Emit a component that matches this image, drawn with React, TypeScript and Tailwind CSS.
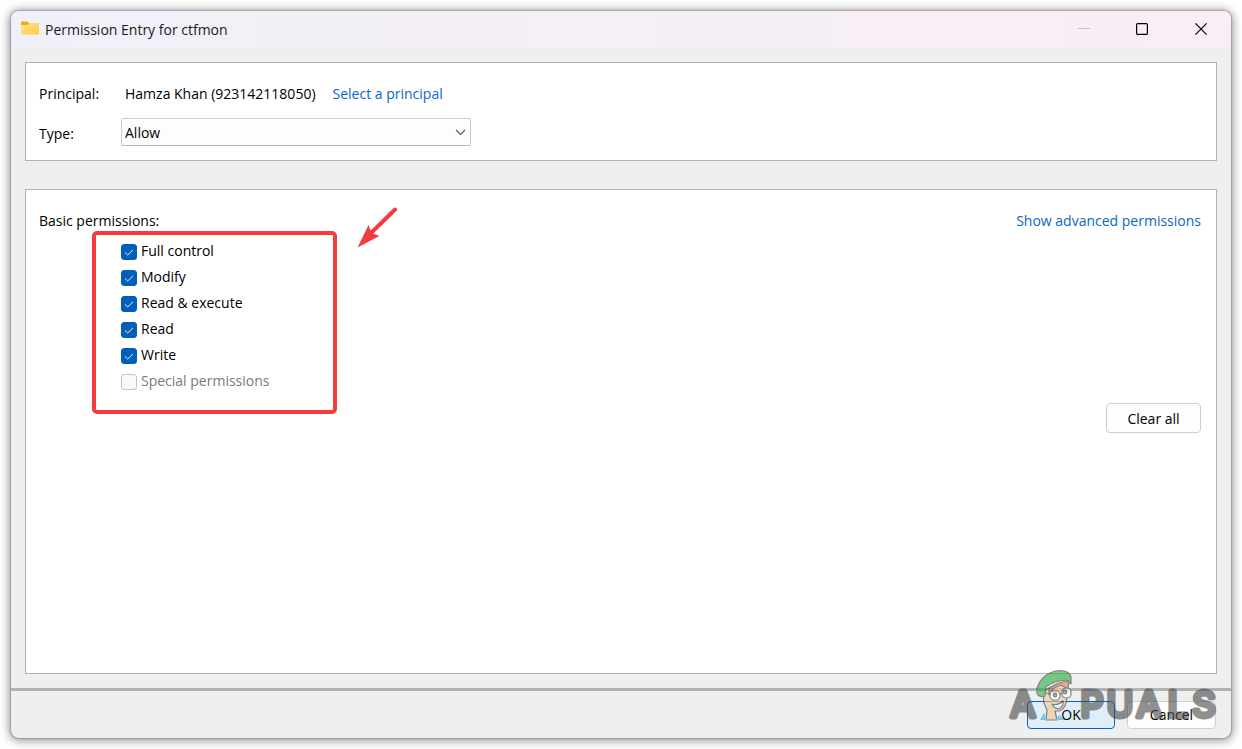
import { useState } from 'react'

const permissions = [
  { id: 'full', label: 'Full control' },
  { id: 'modify', label: 'Modify' },
  { id: 'execute', label: 'Read & execute' },
  { id: 'read', label: 'Read' },
  { id: 'write', label: 'Write' },
  { id: 'special', label: 'Special permissions', disabled: true },
]

const FolderIcon = () => (
  <svg width="18" height="14" viewBox="0 0 18 14" className="mb-[3px]" aria-hidden="true">
    <defs>
      <linearGradient id="folder" x1="0" y1="0" x2="1" y2="1">
        <stop offset="0" stopColor="#ffe594" />
        <stop offset="1" stopColor="#ffcb3d" />
      </linearGradient>
    </defs>
    <path d="M0 1.5Q0 0.5 1 0.5H6L8 2V5H0Z" fill="#f0ab14" />
    <path d="M0 4H6.5L8.5 2H17Q18 2 18 3V12.5Q18 13.5 17 13.5H1Q0 13.5 0 12.5Z" fill="url(#folder)" />
  </svg>
)

const TitleBar = () => (
  <header className="flex h-[37px] items-center rounded-t-lg bg-linear-to-r from-[#f1f0f8] to-[#f9edf6] pl-[10px]">
    <FolderIcon />
    <h1 className="ml-[6px] flex-1 text-[14px] text-[#1a1a1a]">Permission Entry for ctfmon</h1>
    <button aria-label="Minimize" disabled className="flex h-full w-[58px] items-center justify-center pb-px">
      <svg width="12" height="12" viewBox="0 0 12 12">
        <path d="M0 5.5H12" stroke="#c4bcc6" />
      </svg>
    </button>
    <button aria-label="Maximize" className="flex h-full w-[58px] items-center justify-center pb-px">
      <svg width="12" height="12" viewBox="0 0 12 12" fill="none">
        <rect x="0.6" y="0.6" width="10.8" height="10.8" rx="1" stroke="#000" strokeWidth="1.2" />
      </svg>
    </button>
    <button aria-label="Close" className="flex h-full w-[60px] items-center justify-center pb-px">
      <svg width="12" height="12" viewBox="0 0 12 12">
        <path d="M0.4 0.4L11.6 11.6M11.6 0.4L0.4 11.6" stroke="#000" strokeWidth="1.2" />
      </svg>
    </button>
  </header>
)

const PrincipalPanel = () => (
  <section className="border border-[#b1b3b3] bg-white pt-[17px] pb-[14px] pl-[13px]">
    <div className="flex h-7 items-center">
      <span className="w-[86px]">Principal:</span>
      <span>Hamza Khan (923142118050)</span>
      <a href="#principal" className="ml-[17px] text-[#0b66c9]">Select a principal</a>
    </div>
    <div className="mt-[10px] flex h-7 items-center">
      <label htmlFor="type" className="w-[82px] pt-1">Type:</label>
      <div className="relative w-[350px]">
        <select
          id="type"
          className="block h-7 w-full appearance-none rounded-xs border border-[#cccccc] border-b-[#b8b8b8] bg-[#fdfdfd] px-[3px] pt-px"
        >
          <option>Allow</option>
          <option>Deny</option>
        </select>
        <svg className="pointer-events-none absolute top-[11px] right-[5px]" width="11" height="7" viewBox="0 0 11 7" fill="none">
          <path d="M1 1L5.5 5.5L10 1" stroke="#555" strokeWidth="1.1" />
        </svg>
      </div>
    </div>
  </section>
)

const PermissionsPanel = () => {
  const [checked, setChecked] = useState(['full', 'modify', 'execute', 'read', 'write'])

  const toggle = (id: string) =>
    setChecked(checked.includes(id) ? checked.filter((c) => c !== id) : [...checked, id])

  return (
    <section className="flex-1 border border-[#b1b3b3] bg-white pt-[21px] pr-[15px] pl-[13px]">
      <div className="flex justify-between">
        <h2>Basic permissions:</h2>
        <a href="#advanced" className="text-[#0b66c9]">Show advanced permissions</a>
      </div>
      <div className="relative ml-[82px] w-fit pt-2">
        <ul>
          {permissions.map((p) => (
            <li key={p.id} className="flex h-[26px] items-center">
              <span className="relative mr-1 size-4">
                <input
                  id={p.id}
                  type="checkbox"
                  disabled={p.disabled}
                  checked={checked.includes(p.id)}
                  onChange={() => toggle(p.id)}
                  className="peer block size-4 appearance-none rounded-[3px] border border-[#c3c3c3] bg-[#f9f9f9] checked:border-[#005fb8] checked:bg-[#005fb8]"
                />
                <svg className="pointer-events-none absolute inset-0 hidden peer-checked:block" width="16" height="16" viewBox="0 0 16 16" fill="none">
                  <path d="M4 8.4L6.7 11L12 5.8" stroke="#e6f0f9" strokeWidth="1" />
                </svg>
              </span>
              <label htmlFor={p.id} className={p.disabled ? 'pb-0.5 text-[#7a7a7a]' : 'pb-0.5'}>{p.label}</label>
            </li>
          ))}
        </ul>
        {/* highlight and pointer */}
        <div className="pointer-events-none absolute top-0 -left-[29px] h-[183px] w-[245px] rounded-[5px] border-4 border-[#f23c3e]" />
        <svg className="pointer-events-none absolute -top-6 left-[236px]" width="42" height="42" viewBox="0 0 42 42">
          <path d="M38 2.5L13 27" stroke="#f23c3e" strokeWidth="4" strokeLinecap="round" />
          <path d="M0.5 40.5L11.5 18L14.5 26L22.5 29Z" fill="#f23c3e" />
        </svg>
      </div>
      <div className="mt-2 flex justify-end">
        <button className="h-[30px] w-[95px] rounded-sm border border-[#cfcfcf] bg-[#fdfdfd] pt-px">Clear all</button>
      </div>
    </section>
  )
}

const Watermark = () => (
  <svg
    className="pointer-events-none absolute right-[14px] bottom-0 overflow-visible opacity-60"
    width="208"
    height="70"
    viewBox="0 0 208 70"
    aria-hidden="true"
  >
    <g
      fill="#484848"
      stroke="#484848"
      strokeWidth="5"
      strokeLinejoin="round"
      fontFamily="Inter, sans-serif"
      fontWeight="400"
      fontSize="36"
      textAnchor="middle"
    >
      <text x="14" y="49">A</text>
      <text x="83" y="49">P</text>
      <text x="111" y="49">U</text>
      <text x="140" y="49">A</text>
      <text x="169" y="49">L</text>
      <text x="195" y="49">S</text>
    </g>
    <g stroke="#3a3a3a" strokeWidth="1.2" strokeLinejoin="round">
      <path d="M34 25Q38 19 54 14Q60 20 58 30Q57 41 50 43L46 43L48 52H37L38 42L35 35Z" fill="#f2c98d" />
      <path d="M40 21Q48 14 60 13L59 21L52 17L45 20L40 27Z" fill="#e0793f" />
      <path d="M28 20Q32 7 46 3Q60 1 62 9L62 16L58 12Q44 13 37 19L36 28Q30 30 28 25Z" fill="#27ad40" />
      <rect x="41" y="23" width="10" height="9" rx="4" fill="#fff" />
      <rect x="53" y="20" width="9" height="10" rx="4" fill="#fff" />
      <path d="M37 25L42 26M51 26L53 25" fill="none" />
      <circle cx="46" cy="27" r="1.8" fill="#2699c4" />
      <circle cx="56" cy="24" r="1.8" fill="#2699c4" />
      <path d="M43 36Q49 38 54 33Q55 39 49 41Q45 40 43 36Z" fill="#fff" />
      <path d="M31 52L35 45L38 52Z" fill="#3aaedb" stroke="none" />
      <path d="M47 52L50 47L55 52Z" fill="#3aaedb" stroke="none" />
    </g>
  </svg>
)

const App = () => (
  <div className="flex min-h-screen flex-col bg-white p-[11px] font-['Open_Sans','Noto_Sans',sans-serif] text-[14px] leading-5 text-black">
    <main className="relative flex flex-1 flex-col rounded-lg bg-[#efefef] shadow-[0_0_2px_#555,0_1px_10px_2px_#999]">
      <TitleBar />
      <div className="flex flex-1 flex-col gap-7 p-[14px]">
        <PrincipalPanel />
        <PermissionsPanel />
      </div>
      <footer className="flex h-[50px] items-center justify-end gap-3 border-t-3 border-[#b1b3b3] pr-[15px]">
        <button className="h-7 w-[88px] rounded-sm border border-[#0067c0] bg-[#e0eef9]">OK</button>
        <button className="h-7 w-[89px] rounded-sm border border-[#d0d0d0] bg-[#fdfdfd]">Cancel</button>
      </footer>
      <Watermark />
    </main>
  </div>
)

export default App
